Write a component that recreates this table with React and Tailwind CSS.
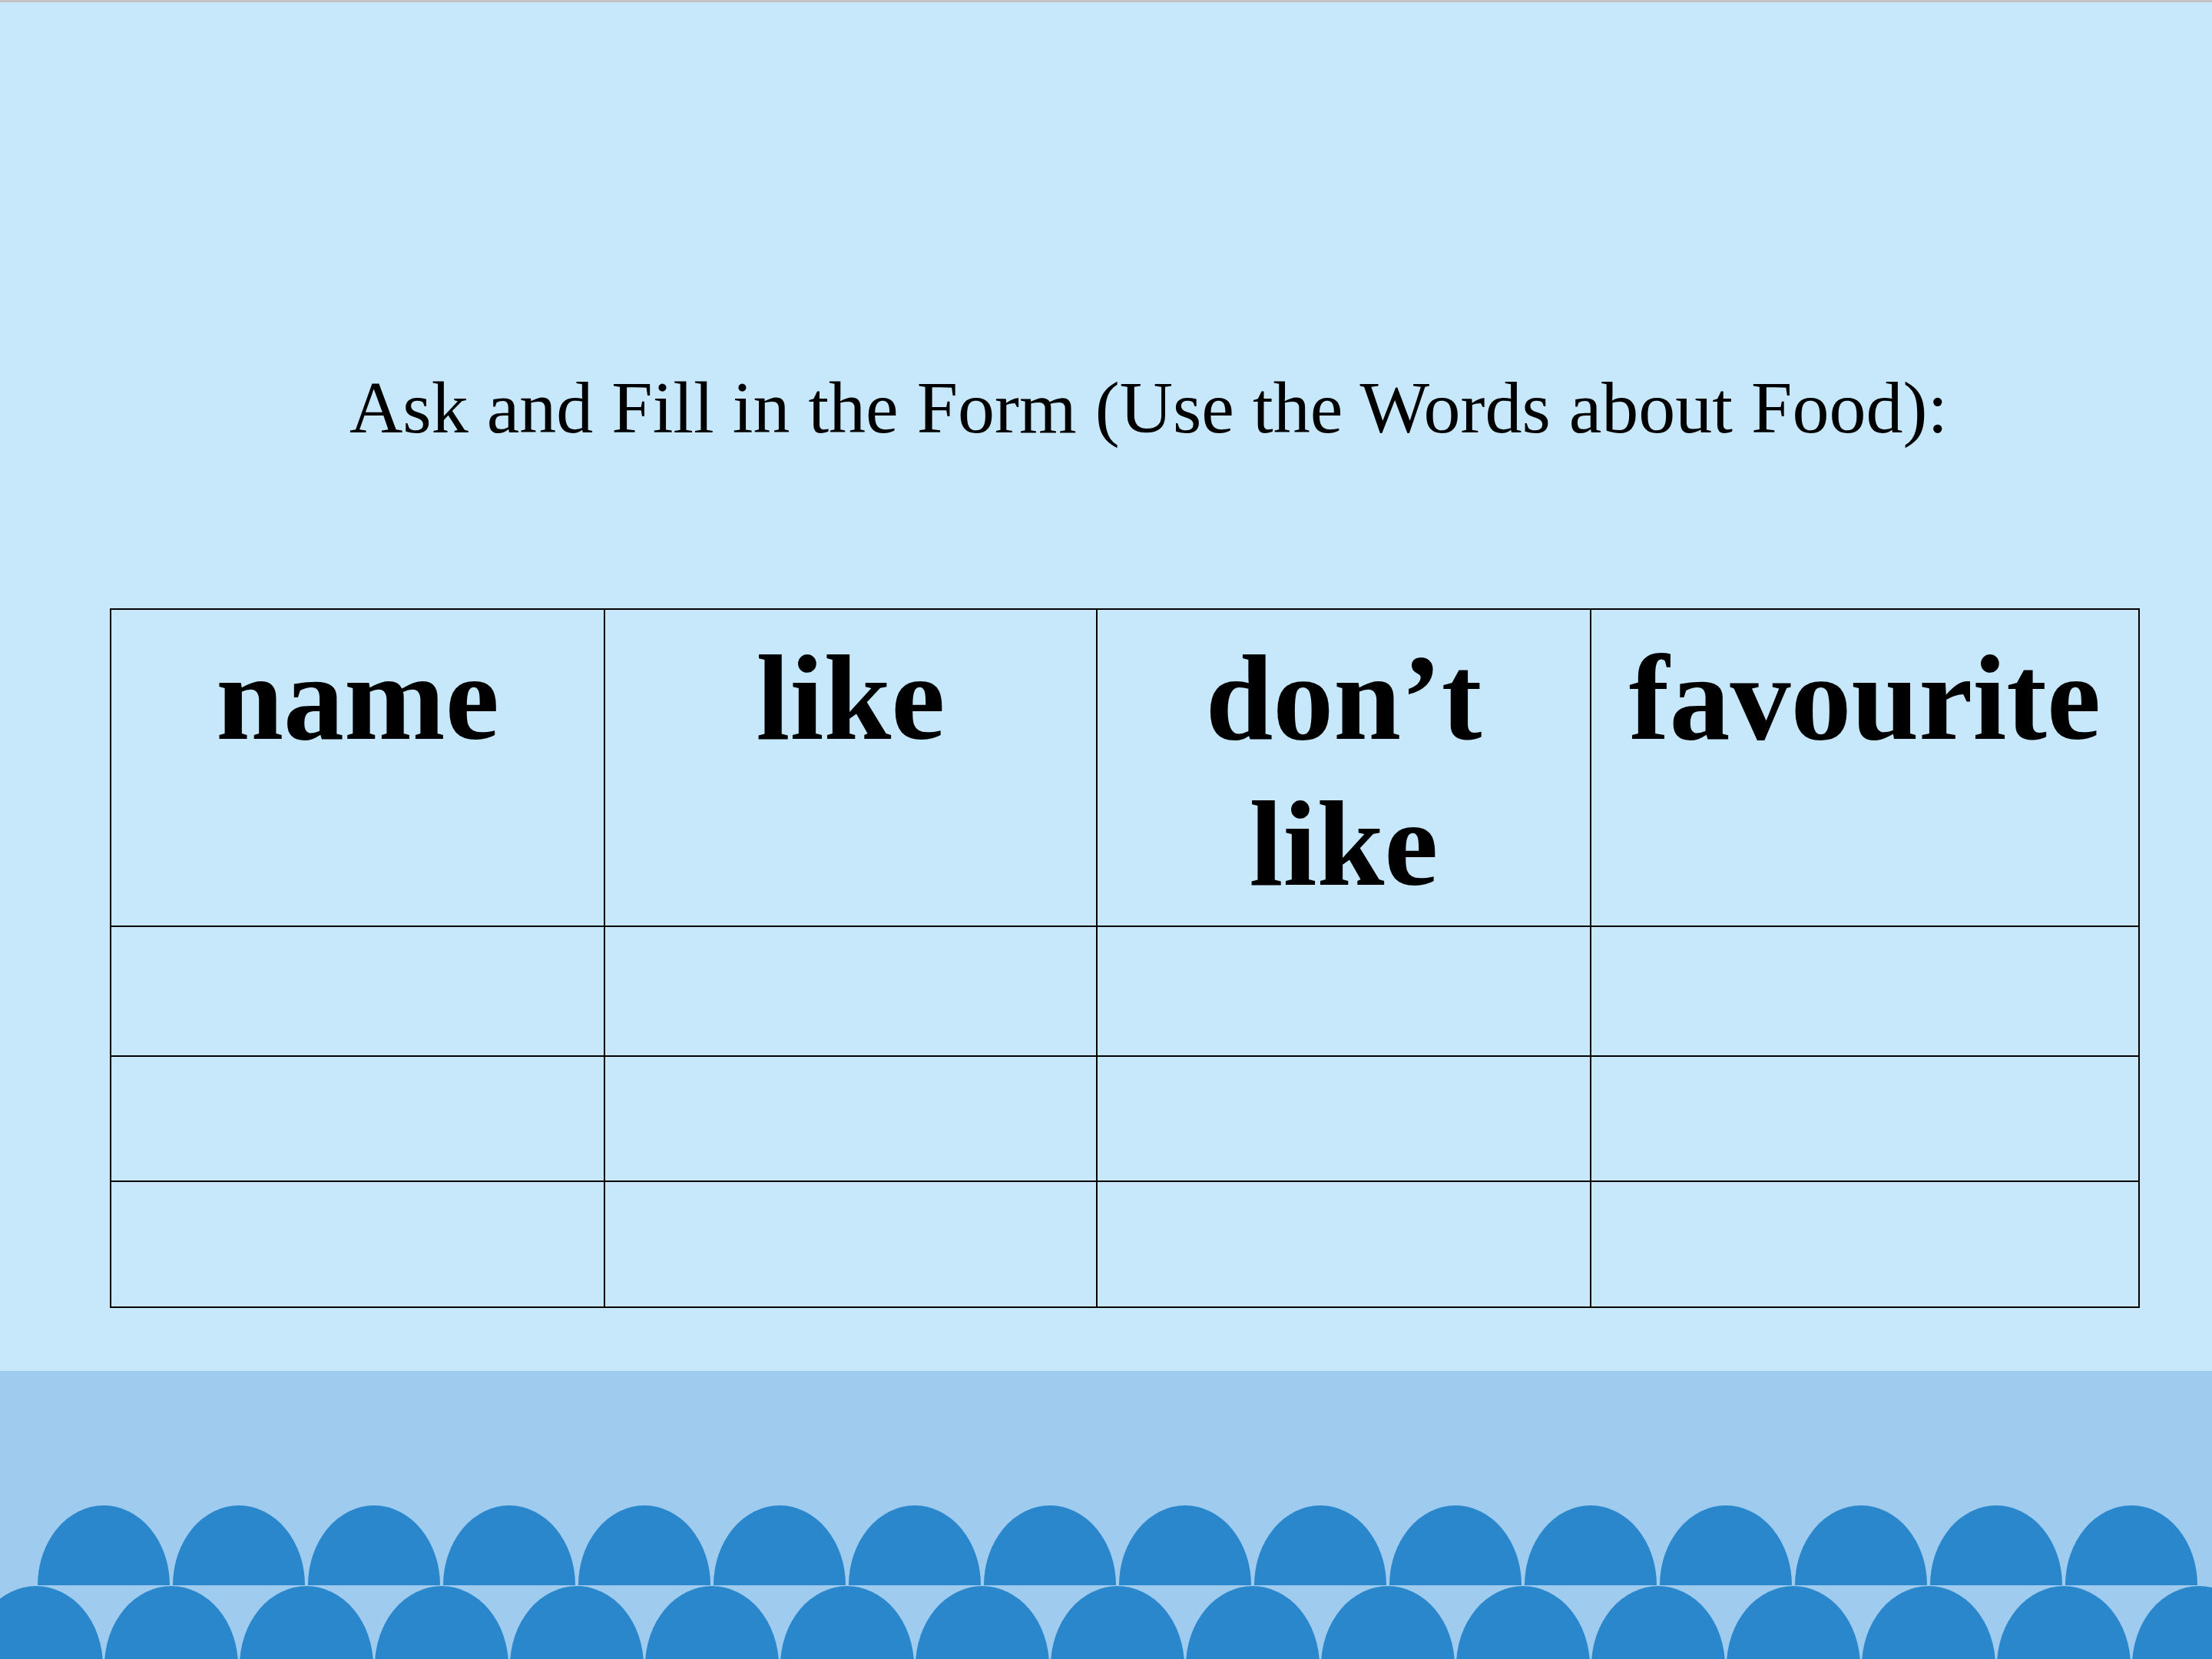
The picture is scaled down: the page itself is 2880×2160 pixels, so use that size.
const headers = [["name"], ["like"], ["don’t", "like"], ["favourite"]];
const bodyRows = ["h-[169px]", "h-[163px]", "h-[164px]"];

const Scallops = () => {
    const top = Array.from({ length: 16 }, (_, i) => 135 + 176 * i);
    const bottom = Array.from({ length: 17 }, (_, j) => 47 + 176 * j);

    return (
        <svg className="block" width="2880" height="205" viewBox="0 0 2880 205">
            {/* upper row, flat base */}
            {top.map((cx) => (
                <path
                    key={`t${cx}`}
                    d={`M${cx - 86} 109 A86 104 0 0 1 ${cx + 86} 109 Z`}
                    fill="#2a87cc"
                />
            ))}
            {/* lower row, cut by the page edge */}
            {bottom.map((cx) => (
                <ellipse key={`b${cx}`} cx={cx} cy="214" rx="87" ry="104" fill="#2a87cc" />
            ))}
        </svg>
    );
};

const App = () => {
    return (
        <div className="w-[2880px] h-[2160px] flex flex-col overflow-hidden bg-[#c6e8fa] text-black font-['Liberation_Serif','Times_New_Roman',serif]">
            <div className="h-[3px] bg-[#c3c3c3]" />

            {/* Title + form */}
            <div className="flex-1 flex flex-col pt-[473px]">
                <h1 className="pl-[455px] text-[96px] leading-[110px] font-normal whitespace-nowrap">
                    Ask and Fill in the Form (Use the Words about Food):
                </h1>

                <div className="mt-[206px] ml-[143px] w-[2643px] grid grid-cols-[643px_641px_643px_714px] border-l-2 border-t-2 border-black">
                    {headers.map((lines, i) => (
                        <div
                            key={i}
                            className="h-[413px] border-r-2 border-b-2 border-black pt-[20px] text-center font-bold text-[158px] leading-[190px] whitespace-nowrap"
                        >
                            {lines.map((l, k) => (
                                <div key={k}>{l}</div>
                            ))}
                        </div>
                    ))}
                    {bodyRows.map((h, r) =>
                        headers.map((_, c) => (
                            <div key={`${r}-${c}`} className={`${h} border-r-2 border-b-2 border-black`} />
                        ))
                    )}
                </div>
            </div>

            {/* Bottom wave band */}
            <div className="h-[375px] bg-[#9fcbef] flex flex-col justify-end">
                <Scallops />
            </div>
        </div>
    );
};

export default App;
